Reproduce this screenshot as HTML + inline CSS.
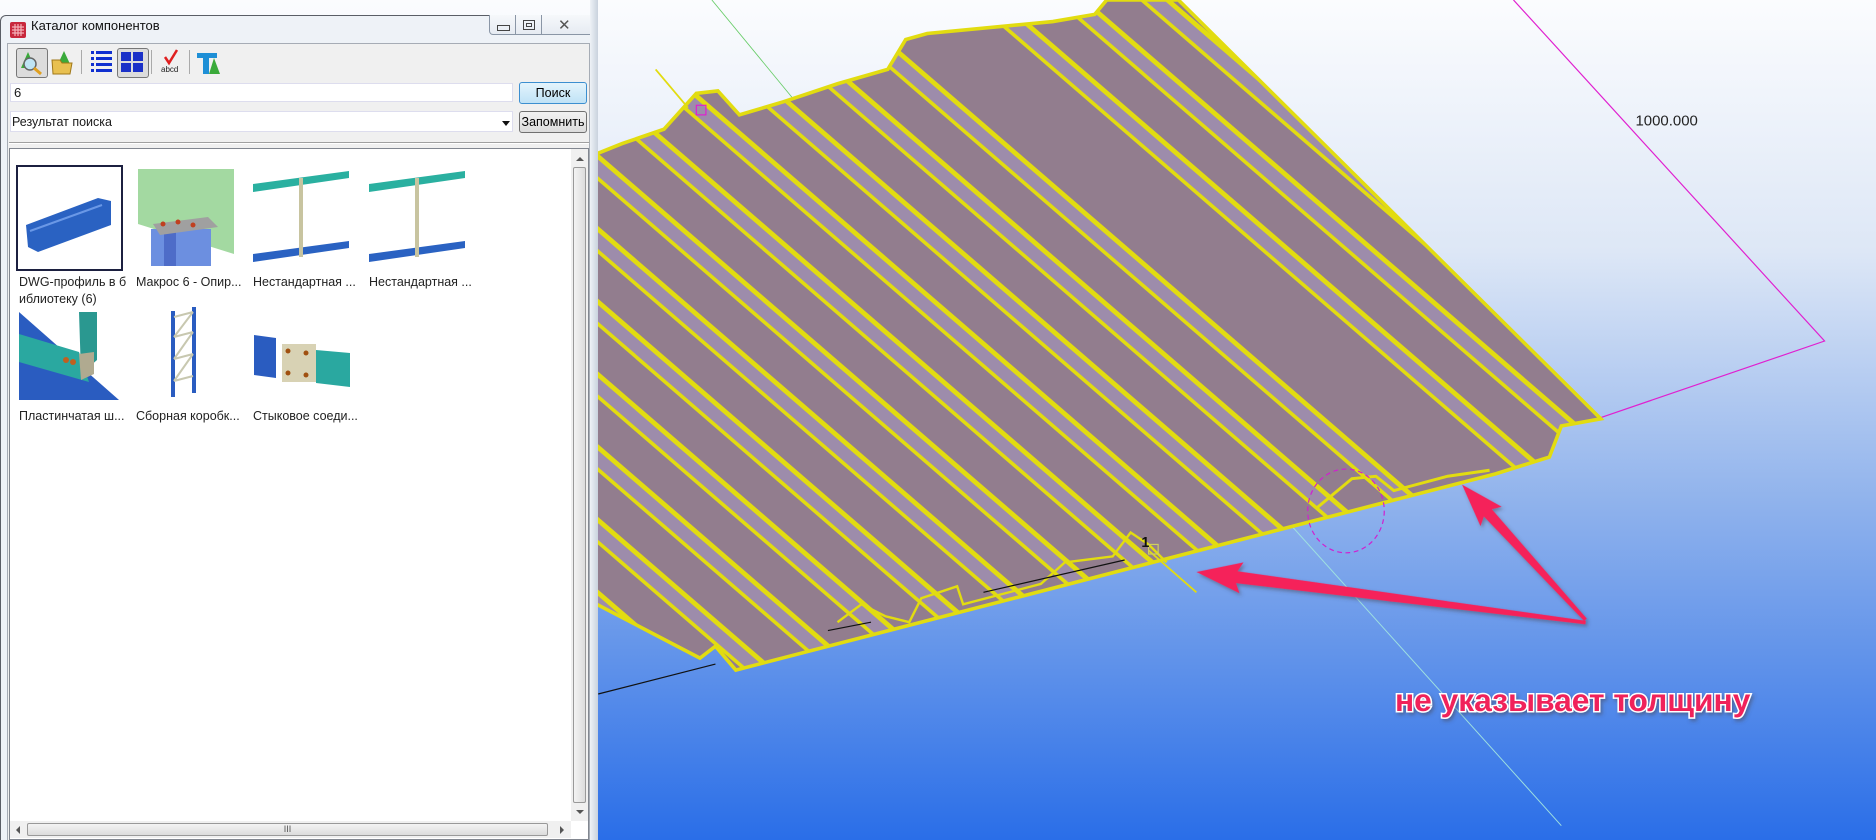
<!DOCTYPE html>
<html><head><meta charset="utf-8">
<style>
html,body{margin:0;padding:0;width:1876px;height:840px;overflow:hidden;font-family:"Liberation Sans","Noto Sans CJK SC",sans-serif;}
#bg{position:absolute;left:0;top:0;display:block;}
.dlg{position:absolute;left:0;top:15px;width:597px;height:825px;background:#eef2f7;border:1px solid #5a5e66;border-bottom:none;border-radius:6px 6px 0 0;box-sizing:border-box;}
.title{position:absolute;left:30px;top:20px;font-size:13px;color:#111;}
.client{position:absolute;left:7px;top:43px;width:583px;height:797px;background:#f0f0f0;border:1px solid #a6acb5;border-bottom:none;box-sizing:border-box;}
.abs{position:absolute;}
.txt{font-size:12px;color:#1a1a1a;}
.btn{position:absolute;border:1px solid #707070;border-radius:3px;background:linear-gradient(#f2f2f2,#dcdcdc);font-size:12.5px;text-align:center;box-sizing:border-box;}
.lbl{position:absolute;font-size:12.5px;color:#222;white-space:nowrap;}
</style></head><body>
<svg id="bg" width="1876" height="840" viewBox="0 0 1568 702" preserveAspectRatio="none">
<defs>
<linearGradient id="g" x1="0" y1="0" x2="0" y2="1">
<stop offset="0" stop-color="#fbfcfe"/><stop offset="0.3" stop-color="#dde7f6"/><stop offset="0.6" stop-color="#8fb2ec"/><stop offset="1" stop-color="#2a6ee8"/>
</linearGradient>
<clipPath id="sc"><polygon points="470,140 520,120 555,108 582,78 600,76 618,96 655,85 700,70 742,58 757,33 775,28 880,18 915,12 925,0 985,0 1338,350 1305,356 1295,382 1250,396 615,560 598,540 585,550 470,490"/></clipPath>
<filter id="sh" x="-10%" y="-50%" width="120%" height="200%"><feDropShadow dx="1.5" dy="2" stdDeviation="1.5" flood-color="#445" flood-opacity="0.5"/></filter>
</defs>
<rect width="1568" height="702" fill="url(#g)"/>
<line x1="595" y1="0" x2="665" y2="85" stroke="#6c6" stroke-width="0.7"/>
<polyline points="1265,0 1525,285 1335,350" fill="none" stroke="#e020d0" stroke-width="1"/>
<text x="1367" y="105" font-family="Liberation Sans" font-size="12.5" fill="#222">1000.000</text>
<line x1="1080" y1="440" x2="1305" y2="690" stroke="#9ee0e0" stroke-width="0.8"/>
<line x1="500" y1="580" x2="598" y2="555" stroke="#111" stroke-width="1"/>
<g clip-path="url(#sc)">
<rect width="1568" height="702" fill="#927d8e"/>
<g transform="translate(985,0) rotate(40.8)" stroke="#e2dc10">
<g id="p">
<rect x="-600" y="6" width="1300" height="14" fill="#9d8cab" stroke="none"/>
<line x1="-600" y1="6" x2="700" y2="6" stroke-width="4"/>
<line x1="-600" y1="20" x2="700" y2="20" stroke-width="3"/>
</g>
<use href="#p" y="46"/><use href="#p" y="92"/><use href="#p" y="180"/><use href="#p" y="226"/><use href="#p" y="272"/><use href="#p" y="318"/><use href="#p" y="364"/><use href="#p" y="410"/><use href="#p" y="456"/><use href="#p" y="502"/><use href="#p" y="548"/><use href="#p" y="594"/><use href="#p" y="640"/><use href="#p" y="686"/>
</g>
</g>
<polygon points="470,140 520,120 555,108 582,78 600,76 618,96 655,85 700,70 742,58 757,33 775,28 880,18 915,12 925,0 985,0 1338,350 1305,356 1295,382 1250,396 615,560 598,540 585,550 470,490" fill="none" stroke="#e2dc10" stroke-width="3"/>
<polyline points="700,520 720,505 740,515 760,520 770,500 800,490 805,505 870,488 890,470 930,465 945,445 960,455 975,470" fill="none" stroke="#e2dc10" stroke-width="2"/>
<polyline points="1100,425 1130,400 1150,398 1165,410 1210,398 1245,393" fill="none" stroke="#e2dc10" stroke-width="2.5"/>
<line x1="822" y1="495" x2="940" y2="468" stroke="#111" stroke-width="1"/>
<line x1="692" y1="527" x2="728" y2="520" stroke="#111" stroke-width="1"/>
<line x1="548" y1="58" x2="575" y2="90" stroke="#e2dc10" stroke-width="1.5"/>
<line x1="960" y1="460" x2="1000" y2="495" stroke="#e2dc10" stroke-width="1.5"/>
<rect x="582" y="88" width="8" height="8" fill="none" stroke="#e020d0"/>
<rect x="960" y="455" width="8" height="8" fill="none" stroke="#cfd060"/>
<text x="954" y="457" font-family="Liberation Sans" font-weight="bold" font-size="12" fill="#111">1</text>
<ellipse cx="1125" cy="427" rx="32" ry="35" fill="none" stroke="#d020d0" stroke-width="1" stroke-dasharray="4,3"/>
<g filter="url(#sh)" fill="#f5205a">
<polygon transform="translate(1000,478) rotate(7.4)" points="0,0 38,-13 34,-5 328,-1.5 328,1.5 34,5 38,13"/>
<polygon transform="translate(1222,405) rotate(47.6)" points="0,0 36,-12 32,-4.5 153,-1.5 153,1.5 32,4.5 36,12"/>
<text x="1166" y="594" font-family="Liberation Sans" font-weight="bold" font-size="26" textLength="297" lengthAdjust="spacingAndGlyphs" stroke="#fff" stroke-width="2.5" paint-order="stroke" fill="#f0205a">не указывает толщину</text>
</g>
</svg>

<div class="dlg">
<svg class="abs" style="left:8px;top:5px" width="18" height="18" viewBox="0 0 18 18"><rect x="1" y="1" width="16" height="16" rx="2" fill="#c8283c"/><path d="M3 6h12M3 9h12M3 12h12M6 3v12M9 3v12M12 3v12" stroke="#f4b0b8" stroke-width="1.2"/></svg>
<div class="title" style="top:2px;left:30px">Каталог компонентов</div>
<div class="abs" style="left:488px;top:-1px;width:104px;height:19px;border:1px solid #8a96a6;border-top:none;border-radius:0 0 4px 4px;background:linear-gradient(#f6f8fb,#e6ebf2);"></div>
<div class="abs" style="left:514px;top:-1px;width:1px;height:19px;background:#8a96a6"></div>
<div class="abs" style="left:540px;top:-1px;width:1px;height:19px;background:#8a96a6"></div>
<div class="abs" style="left:496px;top:9px;width:11px;height:4px;border:1px solid #444;"></div>
<div class="abs" style="left:522px;top:4px;width:10px;height:8px;border:1px solid #444;"><div style="position:absolute;left:2px;top:2px;width:4px;height:2px;border:1px solid #444"></div></div>
<div class="abs" style="left:557px;top:0px;font-size:15px;color:#555">✕</div>
</div>
<div class="client"></div>
<div class="abs" style="left:16px;top:48px;width:30px;height:28px;border:1px solid #777;border-radius:3px;background:#dcdcdc"></div>
<svg class="abs" style="left:18px;top:50px" width="26" height="26"><polygon points="10,2 3,18 17,18" fill="#3aaa3a"/><circle cx="12" cy="14" r="6" fill="#bfe4f4" stroke="#666" stroke-width="1.5"/><line x1="16" y1="18" x2="23" y2="24" stroke="#e0a020" stroke-width="3"/></svg>
<svg class="abs" style="left:50px;top:50px" width="26" height="26"><polygon points="14,1 8,14 20,14" fill="#3aaa3a"/><polygon points="2,10 10,10 12,13 22,13 20,24 3,24" fill="#e8c050" stroke="#a07818"/></svg>
<div class="abs" style="left:81px;top:50px;width:1px;height:24px;background:#aaa"></div>
<svg class="abs" style="left:91px;top:50px" width="22" height="24"><g fill="#1030d0"><rect x="0" y="1" width="3" height="3"/><rect x="5" y="1" width="16" height="3"/><rect x="0" y="7" width="3" height="3"/><rect x="5" y="7" width="16" height="3"/><rect x="0" y="13" width="3" height="3"/><rect x="5" y="13" width="16" height="3"/><rect x="0" y="19" width="3" height="3"/><rect x="5" y="19" width="16" height="3"/></g></svg>
<div class="abs" style="left:117px;top:48px;width:30px;height:28px;border:1px solid #777;border-radius:3px;background:#dcdcdc"></div>
<svg class="abs" style="left:121px;top:52px" width="22" height="20"><g fill="#1a30c8"><rect x="0" y="0" width="10" height="9"/><rect x="12" y="0" width="10" height="9"/><rect x="0" y="11" width="10" height="9"/><rect x="12" y="11" width="10" height="9"/></g></svg>
<div class="abs" style="left:151px;top:50px;width:1px;height:24px;background:#aaa"></div>
<svg class="abs" style="left:160px;top:49px" width="22" height="26"><path d="M5 8 L9 14 L17 1" fill="none" stroke="#e02020" stroke-width="2.5"/><text x="1" y="23" font-family="Liberation Sans" font-size="8" fill="#222">abcd</text></svg>
<div class="abs" style="left:189px;top:50px;width:1px;height:24px;background:#aaa"></div>
<svg class="abs" style="left:196px;top:50px" width="26" height="26"><rect x="1" y="3" width="20" height="5" fill="#1e8fd6"/><rect x="7" y="8" width="6" height="16" fill="#1e8fd6"/><polygon points="18,8 13,24 24,24" fill="#3aaa3a"/></svg>
<div class="abs" style="left:10px;top:83px;width:503px;height:19px;background:#fff;border:1px solid #dde;box-sizing:border-box"></div>
<div class="abs txt" style="left:14px;top:85px;font-size:13px">6</div>
<div class="btn" style="left:519px;top:82px;width:68px;height:22px;line-height:20px;border-color:#3c8fd0;background:linear-gradient(#e4f4fc,#bfe2f6)">Поиск</div>
<div class="abs" style="left:10px;top:111px;width:503px;height:21px;background:#fff;border:1px solid #dde;box-sizing:border-box"></div>
<div class="abs txt" style="left:12px;top:115px;font-size:12.5px">Результат поиска</div>
<div class="abs" style="left:502px;top:121px;width:0;height:0;border-left:4px solid transparent;border-right:4px solid transparent;border-top:5px solid #111"></div>
<div class="btn" style="left:519px;top:111px;width:68px;height:22px;line-height:20px">Запомнить</div>
<div class="abs" style="left:9px;top:142px;width:580px;height:1px;background:#a0a0a0"></div>
<div class="abs" style="left:9px;top:143px;width:580px;height:1px;background:#fff"></div>
<div class="abs" style="left:9px;top:148px;width:580px;height:692px;background:#fff;border:1px solid #828790;box-sizing:border-box"></div>
<div class="abs" style="left:571px;top:149px;width:17px;height:672px;background:#f0f0f0"></div>
<div class="abs" style="left:576px;top:157px;width:0;height:0;border-left:4px solid transparent;border-right:4px solid transparent;border-bottom:4px solid #555"></div>
<div class="abs" style="left:573px;top:167px;width:13px;height:636px;border:1px solid #999;border-radius:2px;background:linear-gradient(90deg,#f3f3f3,#dcdcdc);box-sizing:border-box"></div>
<div class="abs" style="left:576px;top:810px;width:0;height:0;border-left:4px solid transparent;border-right:4px solid transparent;border-top:4px solid #555"></div>
<div class="abs" style="left:10px;top:821px;width:561px;height:17px;background:#f0f0f0"></div>
<div class="abs" style="left:16px;top:826px;width:0;height:0;border-top:4px solid transparent;border-bottom:4px solid transparent;border-right:4px solid #555"></div>
<div class="abs" style="left:27px;top:823px;width:521px;height:13px;border:1px solid #999;border-radius:2px;background:linear-gradient(#f3f3f3,#dcdcdc);box-sizing:border-box;text-align:center;font-size:9px;line-height:11px;color:#555">III</div>
<div class="abs" style="left:560px;top:826px;width:0;height:0;border-top:4px solid transparent;border-bottom:4px solid transparent;border-left:4px solid #555"></div>
<div class="abs" style="left:590px;top:0;width:8px;height:840px;background:linear-gradient(90deg,#eef2f7,#c9d2dd)"></div>

<div class="abs" style="left:16px;top:165px;width:107px;height:106px;border:2px solid #1c2040;box-sizing:border-box"></div>
<svg class="abs" style="left:26px;top:195px" width="86" height="60"><polygon points="0,30 72,3 85,6 85,30 12,57 2,52" fill="#2a62c2"/><polyline points="4,36 76,10 M6,44 80,18" stroke="#6a98e6" stroke-width="2" fill="none"/></svg>
<svg class="abs" style="left:138px;top:169px" width="96" height="97"><polygon points="0,0 96,0 96,85 0,55" fill="#8cd08a" opacity="0.8"/><rect x="13" y="60" width="60" height="37" fill="#6c8fe0"/><rect x="26" y="60" width="12" height="37" fill="#4e6cc8"/><polygon points="15,55 70,48 80,58 22,66" fill="#a0a0a0"/><g fill="#c04020"><circle cx="25" cy="55" r="2.5"/><circle cx="40" cy="53" r="2.5"/><circle cx="55" cy="56" r="2.5"/></g></svg>
<svg class="abs" style="left:253px;top:170px" width="98" height="98"><polygon points="0,14 96,1 96,8 0,22" fill="#2ab0a0"/><polygon points="0,84 96,71 96,78 0,92" fill="#2a62c2"/><rect x="46" y="8" width="4" height="79" fill="#c8c4a0"/></svg>
<svg class="abs" style="left:369px;top:170px" width="98" height="98"><polygon points="0,14 96,1 96,8 0,22" fill="#2ab0a0"/><polygon points="0,84 96,71 96,78 0,92" fill="#2a62c2"/><rect x="46" y="8" width="4" height="79" fill="#c8c4a0"/></svg>
<div class="lbl" style="left:19px;top:275px">DWG-профиль в б</div>
<div class="lbl" style="left:19px;top:292px">иблиотеку (6)</div>
<div class="lbl" style="left:136px;top:275px">Макрос 6 - Опир...</div>
<div class="lbl" style="left:253px;top:275px">Нестандартная ...</div>
<div class="lbl" style="left:369px;top:275px">Нестандартная ...</div>
<svg class="abs" style="left:19px;top:312px" width="100" height="88"><polygon points="0,0 100,88 0,88" fill="#2a5cc0"/><polygon points="0,22 60,40 70,70 0,50" fill="#2aa8a0"/><polygon points="60,0 78,0 78,48 62,62" fill="#2a9890"/><polygon points="60,42 75,40 75,62 62,68" fill="#b0aa90"/><circle cx="47" cy="48" r="3" fill="#c06020"/><circle cx="54" cy="50" r="3" fill="#c06020"/></svg>
<svg class="abs" style="left:171px;top:307px" width="30" height="92"><rect x="0" y="4" width="4" height="86" fill="#2a5cc0"/><rect x="21" y="0" width="4" height="86" fill="#2a5cc0"/><path d="M3 10 L22 5 M3 30 L22 25 M3 52 L22 47 M3 74 L22 69 M3 30 L22 5 M3 52 L22 25 M3 74 L22 47" stroke="#c8c8b0" stroke-width="2"/></svg>
<svg class="abs" style="left:254px;top:335px" width="98" height="52"><polygon points="0,0 22,3 22,43 0,40" fill="#2a5cc0"/><polygon points="62,15 96,18 96,52 62,48" fill="#2aa8a0"/><rect x="28" y="9" width="34" height="38" fill="#d8d2b4"/><g fill="#a05010"><circle cx="34" cy="16" r="2.5"/><circle cx="52" cy="18" r="2.5"/><circle cx="34" cy="38" r="2.5"/><circle cx="52" cy="40" r="2.5"/></g></svg>
<div class="lbl" style="left:19px;top:409px">Пластинчатая ш...</div>
<div class="lbl" style="left:136px;top:409px">Сборная коробк...</div>
<div class="lbl" style="left:253px;top:409px">Стыковое соеди...</div>
</body></html>
